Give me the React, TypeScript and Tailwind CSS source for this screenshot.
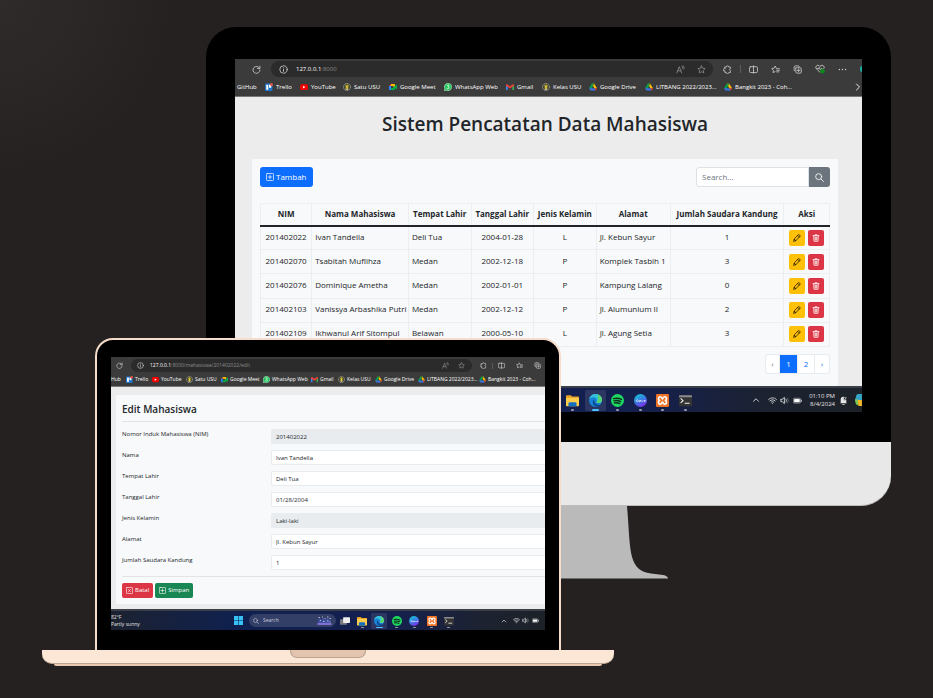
import React from 'react';

const FONT = 'font-["Open_Sans","Noto_Sans",sans-serif]';

type IconProps = { className?: string };

function Line({ className = '', children, w = 1.4 }: { className?: string; children: React.ReactNode; w?: number }) {
  return (
    <svg viewBox="0 0 16 16" className={`shrink-0 ${className}`} fill="none" stroke="currentColor" strokeWidth={w} strokeLinecap="round" strokeLinejoin="round" aria-hidden="true">
      {children}
    </svg>
  );
}

const Reload = ({ className }: IconProps) => (
  <Line className={className}><path d="M13.6 6A6.2 6.2 0 1 0 14.2 8.8" /><path d="M14 2v4.2H9.8" /></Line>
);
const Info = ({ className }: IconProps) => (
  <Line className={className}><circle cx="8" cy="8" r="6.6" /><path d="M8 7.4v4" /><path d="M8 4.7v.3" /></Line>
);
const ReadAloud = ({ className }: IconProps) => (
  <Line className={className}><path d="M1.5 14 5.8 3l4.3 11M3 10.4h5.6M10.4 2.2c1.2 1 1.6 2.4 1 4M12.6 1c1.8 1.6 2.3 4 1.4 6.4" /></Line>
);
const Star = ({ className }: IconProps) => (
  <Line className={className}><path d="m8 1.6 2 4.1 4.5.6-3.3 3.2.8 4.5L8 11.9 4 14l.8-4.5L1.5 6.3 6 5.7z" /></Line>
);
const Puzzle = ({ className }: IconProps) => (
  <Line className={className}><path d="M3.500 3.500h2.500a2 2 0 1 1 4 0h3v3.200a1.600 1.600 0 0 0 0 3.100v3.700H10a2 2 0 0 1-4 0H3.500V10.300a2.200 2.200 0 1 1 0-4z" /></Line>
);
const Split = ({ className }: IconProps) => (
  <Line className={className}><rect x="1" y="3" width="14" height="10.4" rx="1.5" /><path d="M8 1.5v13.2" /></Line>
);
const Favorites = ({ className }: IconProps) => (
  <Line className={className}><path d="M9.5 5.8 7.4 1.8 5.5 5.7l-4.3.6 3.1 3-.7 4.3 3.7-2M10.5 6.6h4.6M10 9.4h5M10 12.2h4" /></Line>
);
const Collections = ({ className }: IconProps) => (
  <Line className={className}><path d="M3.6 10.8A2 2 0 0 1 2 8.600V4a2.500 2.500 0 0 1 2.500-2.500H9A2 2 0 0 1 11.200 3M5.400 4.800h7.300a2 2 0 0 1 2 2v5.700a2 2 0 0 1-2 2H7.200a2 2 0 0 1-2-2zM10 7v5M7.500 9.500h5" /></Line>
);
const Health = ({ className }: IconProps) => (
  <svg viewBox="0 0 16 16" className={`shrink-0 ${className}`} fill="none" aria-hidden="true">
    <path d="M8 13.300 2.400 7.900a3.300 3.300 0 0 1 4.500-5L8 4l1.200-1.100a3.300 3.300 0 0 1 4.700 4.600M2.500 7.500h3l1.300-2.200 1.700 3.900 1.200-1.700h2" stroke="#d4d4d4" strokeWidth="1.300" />
    <circle cx="12" cy="11.500" r="3.800" fill="#10851d" />
  </svg>
);
const Dots = ({ className }: IconProps) => (
  <Line className={className} w={2.4}><path d="M2.500 8h.01M8 8h.01M13.500 8h.01" /></Line>
);
const ChevronUp = ({ className }: IconProps) => <Line className={className} w={1.800}><path d="m3 10.500 5-5 5 5" /></Line>;
const ChevronRight = ({ className }: IconProps) => <Line className={className} w={1.800}><path d="m5 2 6 6-6 6" /></Line>;
const Magnifier = ({ className }: IconProps) => (
  <Line className={className} w={1.500}><circle cx="6.500" cy="6.500" r="5.300" /><path d="m10.500 10.500 4.600 4.600" /></Line>
);
const PlusBox = ({ className }: IconProps) => (
  <Line className={className}><rect x="1" y="1" width="14" height="14" rx="1.500" /><path d="M8 4.500v7M4.500 8h7" /></Line>
);
const CrossBox = ({ className }: IconProps) => (
  <Line className={className}><rect x="1" y="1" width="14" height="14" rx="1.500" /><path d="m5.500 5.500 5 5m0-5-5 5" /></Line>
);
const Pencil = ({ className }: IconProps) => (
  <Line className={className} w={1.400}><path d="m12 1.300 2.700 2.700-9.200 9.500-4.200 1.200L2.500 10.500zM9.800 3.500l2.700 2.700M2.700 10.500l2.800 2.800" /></Line>
);
const Trash = ({ className }: IconProps) => (
  <Line className={className} w={1.500}><path d="M2 3.300h12M6 3V1.500h4V3M3.300 3.500l.7 11h8l.7-11M6.200 6v6M8 6v6M9.800 6v6" /></Line>
);

const Trello = ({ className }: IconProps) => (
  <svg viewBox="0 0 16 16" className={`shrink-0 ${className}`} aria-hidden="true">
    <rect y="1" width="15" height="15" rx="2" fill="#1b74c9" /><rect x="2.500" y="3.500" width="4" height="10" fill="#fff" /><rect x="8" y="3.500" width="4.500" height="6" fill="#fff" /><circle cx="13" cy="3" r="3" fill="#e8503a" />
  </svg>
);
const YouTube = ({ className }: IconProps) => (
  <svg viewBox="0 0 16 16" className={`shrink-0 ${className}`} aria-hidden="true">
    <rect y="2.500" width="16" height="11.500" rx="3" fill="#f00000" /><path d="m6.200 5.700 4.500 2.500-4.500 2.600z" fill="#fff" />
  </svg>
);
const Usu = ({ className }: IconProps) => (
  <svg viewBox="0 0 16 16" className={`shrink-0 ${className}`} fill="none" aria-hidden="true">
    <circle cx="8" cy="8" r="7" stroke="#bdb9a2" strokeWidth="1.500" strokeDasharray="3 1" /><circle cx="8" cy="8" r="5" fill="#5a5b24" /><path d="M8 3v9M5 5.500 8 8l3-2.500M5.500 10h5" stroke="#f3d343" strokeWidth="1.800" /><path d="M5.500 13h5" stroke="#ddd" strokeWidth="1.500" />
  </svg>
);
const Meet = ({ className }: IconProps) => (
  <svg viewBox="0 0 16 16" className={`shrink-0 ${className}`} aria-hidden="true">
    <path d="M4 2v4H0z" fill="#ea4335" /><path d="M4 2h6.500a1.500 1.500 0 0 1 1.500 1.500V8H8.500V6H4z" fill="#fbbc04" /><path d="M0 6h4v8H1.300A1.300 1.300 0 0 1 0 12.700z" fill="#2684fc" /><path d="M4 10h4.500V8L12 6l4-3v10l-4-3v2.500a1.500 1.500 0 0 1-1.500 1.500H4z" fill="#00ac47" />
  </svg>
);
const WhatsApp = ({ className }: IconProps) => (
  <svg viewBox="0 0 16 16" className={`shrink-0 ${className}`} fill="none" aria-hidden="true">
    <path d="M.5 15.500 1.700 11.500A7.400 7.400 0 1 1 4.500 14.300z" fill="#20c45a" stroke="#e8f8ed" /><path d="M5.500 4.500h4.500L8 7.300c3 .3 3 4.200-.2 4.200-1.300 0-2.200-.5-2.600-1.200" stroke="#fff" strokeWidth="1.500" />
  </svg>
);
const Gmail = ({ className }: IconProps) => (
  <svg viewBox="0 0 16 16" className={`shrink-0 ${className}`} aria-hidden="true">
    <path d="M0 4h3.500v10H1a1 1 0 0 1-1-1z" fill="#4285f4" /><path d="M12.500 4H16v9a1 1 0 0 1-1 1h-2.500z" fill="#34a853" /><path d="M0 4.500C0 2.500 2 1.700 3.400 2.800L8 6.300l4.600-3.500C14 1.700 16 2.500 16 4.500v1L8 11 0 5.500z" fill="#ea4335" />
  </svg>
);
const Drive = ({ className }: IconProps) => (
  <svg viewBox="0 0 16 16" className={`shrink-0 ${className}`} aria-hidden="true">
    <path d="M5.500 1.500h5L5.300 10.500H0z" fill="#00a150" /><path d="M5.500 1.500h5l5.500 9h-5.300z" fill="#fbbc04" /><path d="M0 10.500h11L13.300 15H2.700z" fill="#3777e3" /><path d="M5.500 1.500h5L8 6z" fill="#188038" /><path d="M10.700 10.500H16L13.300 15z" fill="#ea4335" />
  </svg>
);

const BOOKMARKS: { label: string; icon: (p: IconProps) => React.ReactElement; wide: string; small: string }[] = [
  { label: 'Trello', icon: Trello, wide: 'w-[35px]', small: 'w-[26px]' },
  { label: 'YouTube', icon: YouTube, wide: 'w-[43px]', small: 'w-[34px]' },
  { label: 'Satu USU', icon: Usu, wide: 'w-[46px]', small: 'w-[35px]' },
  { label: 'Google Meet', icon: Meet, wide: 'w-[55px]', small: 'w-[42px]' },
  { label: 'WhatsApp Web', icon: WhatsApp, wide: 'w-[62px]', small: 'w-[48px]' },
  { label: 'Gmail', icon: Gmail, wide: 'w-[36px]', small: 'w-[27px]' },
  { label: 'Kelas USU', icon: Usu, wide: 'w-[47px]', small: 'w-[37px]' },
  { label: 'Google Drive', icon: Drive, wide: 'w-[56px]', small: 'w-[43px]' },
  { label: 'LITBANG 2022/2023...', icon: Drive, wide: 'w-[79px]', small: 'w-[61px]' },
  { label: 'Bangkit 2023 - Coh...', icon: Drive, wide: 'w-[80px]', small: 'w-[56px]' },
];

function Folder({ className }: IconProps) {
  return (
    <svg viewBox="0 0 16 16" className={className} aria-hidden="true">
      <path d="M0 2.500A1 1 0 0 1 1 1.500h5L7.500 3H15a1 1 0 0 1 1 1v2H0z" fill="#e5a022" /><path d="M0 4.500h16V14a1 1 0 0 1-1 1H1a1 1 0 0 1-1-1z" fill="#fccc4d" /><path d="M3 15v-3.200A1.800 1.800 0 0 1 4.800 10h6.400a1.800 1.800 0 0 1 1.800 1.800V15z" fill="#1270c4" />
    </svg>
  );
}
function Edge({ className }: IconProps) {
  return (
    <svg viewBox="0 0 16 16" className={className} aria-hidden="true">
      <circle cx="8" cy="8" r="8" fill="#1784d8" /><path d="M.3 6.500C1 2.500 4.300 0 8 0c4.500 0 8 3.300 8 7 0 2.700-2 4.200-4.300 4.200-1.800 0-2.700-.8-2.300-1.400C11 7 8.700 4 5.300 4 3 4 1.200 5 .3 6.500z" fill="#35c1dc" /><path d="M10 .3c3.500.8 6 3.500 6 6.700 0 2.700-2 4.200-4.300 4.200-1.800 0-2.700-.8-2.300-1.400C11.800 7 12 2.500 10 .3z" fill="#5bd56f" /><path d="M6 6.500c-3 3.500-.5 8 3 9.300 2.500-.2 4.500-1.300 5.800-3-4 1.500-8-.5-8.800-6.300z" fill="#0d4b96" />
    </svg>
  );
}
function Spotify({ className }: IconProps) {
  return (
    <svg viewBox="0 0 16 16" className={className} aria-hidden="true">
      <circle cx="8" cy="8" r="8" fill="#1ed760" /><path d="M3.300 5.700c3.200-.9 6.700-.6 9.500 1M3.700 8.400c2.700-.7 5.700-.4 8.200.9M4.200 11c2.200-.5 4.700-.3 6.700.8" fill="none" stroke="#0d2c1c" strokeWidth="1.700" strokeLinecap="round" />
    </svg>
  );
}
function Canva({ className }: IconProps) {
  return (
    <svg viewBox="0 0 16 16" className={className} aria-hidden="true">
      <defs><linearGradient id="canva" x1=".2" y1="0" x2=".7" y2="1"><stop stopColor="#13c4d0" /><stop offset=".5" stopColor="#3c7be6" /><stop offset="1" stopColor="#7d2ae8" /></linearGradient></defs>
      <circle cx="8" cy="8" r="8" fill="url(#canva)" /><path d="M4.500 7c-1.500-.5-2.300 2.200-.7 2.200 1 0 1.500-1.200 2.500-1.200-1 1.500 1 1.700 1.300 0l-.2 1.200c.7-1.600 1.700-1.600 1.500 0m.5-1.200 1 1.200 1-1.200m2 0c-1.600-.3-1.500 1.500-.3 1.200l.6-1.200.2 1.200" stroke="#fff" strokeWidth=".8" fill="none" />
    </svg>
  );
}
function Xampp({ className }: IconProps) {
  return (
    <svg viewBox="0 0 16 16" className={className} aria-hidden="true">
      <rect width="16" height="16" rx="1.500" fill="#f07427" /><path d="M5.300 3.500c-3 0-3 4.500 0 4.500-3 0-3 4.500 0 4.500 1.500 0 2.200-2 2.700-2.500.5.500 1.200 2.500 2.700 2.500 3 0 3-4.500 0-4.500 3 0 3-4.500 0-4.500C9.200 3.500 8.500 5.500 8 6c-.5-.5-1.200-2.500-2.700-2.500z" fill="none" stroke="#fff" strokeWidth="1.900" />
    </svg>
  );
}
function Terminal({ className }: IconProps) {
  return (
    <svg viewBox="0 0 16 16" className={className} aria-hidden="true">
      <rect y="1.500" width="16" height="13.500" rx="1" fill="#343434" /><path d="M0 2.500a1 1 0 0 1 1-1h14a1 1 0 0 1 1 1V4H0z" fill="#8b8b8b" /><path d="m2 5.500 3 2.700-3 2.700M7 11.500h6" fill="none" stroke="#f2f2f2" strokeWidth="1.300" />
    </svg>
  );
}
const APPS = [
  { name: 'File Explorer', Icon: Folder },
  { name: 'Edge', Icon: Edge },
  { name: 'Spotify', Icon: Spotify },
  { name: 'Canva', Icon: Canva },
  { name: 'XAMPP', Icon: Xampp },
  { name: 'Terminal', Icon: Terminal },
];

const Wifi = ({ className }: IconProps) => (
  <Line className={className} w={1.500}><path d="M1 6.200c4-4 10-4 14 0M3.300 8.700c2.700-2.700 6.700-2.700 9.400 0M5.600 11c1.400-1.300 3.400-1.300 4.800 0M8 13.300v.1" /></Line>
);
const Speaker = ({ className }: IconProps) => (
  <Line className={className} w={1.500}><path d="M1.500 6v4h2.300l4 3.500v-11L3.800 6zM10.500 5.500c1.300 1.500 1.300 3.500 0 5" /><path d="M13 3.500c2.300 2.700 2.300 6.300 0 9" opacity=".4" /></Line>
);
const Battery = ({ className }: IconProps) => (
  <svg viewBox="0 0 16 16" className={`shrink-0 ${className}`} aria-hidden="true">
    <rect x=".5" y="4" width="13" height="8.500" rx="2" fill="none" stroke="#ddd" /><rect x="2" y="5.500" width="10" height="5.500" rx=".7" fill="#fff" /><path d="M14 6.500h1.500v3.500H14z" fill="#ddd" />
  </svg>
);

function BrowserChrome({ compact, url }: { compact?: boolean; url: string }) {
  const icon = compact ? 'size-[7px]' : 'size-[9px]';
  return (
    <div className={`shrink-0 overflow-hidden whitespace-nowrap border-b border-[#77797a] bg-[#3b3b3b] text-white ${compact ? 'h-[30px] text-[5px]' : 'h-[38px] text-[6px]'}`}>
      <div className={`flex items-center text-[#d0d0d0] ${compact ? 'h-[17px]' : 'h-[20px]'}`}>
        <button aria-label="Reload" className={compact ? 'ml-[5px]' : 'ml-[17px]'}><Reload className={icon} /></button>
        <div className={`flex items-center rounded-full bg-[#2b2b2b] ${compact ? 'ml-[8px] h-[13px] w-[341px] pl-[6px] pr-[7px]' : 'ml-[10px] h-[16px] min-w-0 flex-1 pl-[8px] pr-[7px]'}`}>
          <Info className={icon} />
          <span className={`flex-1 text-[#8c8c8c] ${compact ? 'ml-[6px]' : 'ml-[8px]'}`}><span className="text-white">127.0.0.1</span>{url}</span>
          <ReadAloud className={`text-[#8f8f8f] ${icon}`} />
          <Star className={`text-[#8f8f8f] ${icon} ${compact ? 'ml-[9px]' : 'ml-[12px]'}`} />
        </div>
        <div className={`flex shrink-0 items-center ${compact ? 'ml-[8px]' : 'ml-[10px]'}`}>
          <Puzzle className={icon} />
          <span className={`w-px bg-[#5c5c5c] ${compact ? 'mx-[5px] h-[6px]' : 'mx-[8px] h-[8px]'}`} />
          <div className={`flex items-center ${compact ? 'gap-[11px]' : 'gap-[13px]'}`}>
            <Split className={icon} />
            <Favorites className={icon} />
            <Collections className={icon} />
            {!compact && <Health className="size-[10px]" />}
            {!compact && <Dots className={icon} />}
            {!compact && <span className="h-[6px] w-[2px] rounded-l-full bg-[#19a7a0]" />}
          </div>
        </div>
      </div>
      <div className={`flex items-center ${compact ? 'h-[11px]' : 'h-[16px]'}`}>
        <a href="#github" className={compact ? 'w-[15px] shrink-0' : 'w-[30px] shrink-0 pl-[2px]'}>{compact ? 'Hub' : 'GitHub'}</a>
        {BOOKMARKS.map(({ label, icon: Icon, wide, small }) => (
          <a key={label} href="#bookmark" className={`flex shrink-0 items-center ${compact ? `${small} gap-[2px]` : `${wide} gap-[3px]`}`}>
            <Icon className={compact ? 'size-[7px]' : 'size-[8px]'} />
            {label}
          </a>
        ))}
        {!compact && <ChevronRight className="ml-auto size-[8px]" />}
      </div>
    </div>
  );
}

function AppIcons({ compact }: { compact?: boolean }) {
  return (
    <div className={`flex h-full shrink-0 items-center justify-between ${compact ? 'w-[103px]' : 'w-[134px]'}`}>
      {APPS.map(({ name, Icon }, i) => (
        <button key={name} aria-label={name} className={`flex flex-col items-center rounded-[2px] ${compact ? 'h-[16px] w-[16px] pt-[3px]' : 'h-[21px] w-[21px] pt-[4px]'} ${i === 1 ? 'bg-white/10' : ''}`}>
          <Icon className={compact ? 'size-[10px]' : 'size-[13px]'} />
          <span className={`rounded-full ${compact ? 'mt-px h-px' : 'mt-[2px] h-[2px]'} ${i === 1 ? 'w-[7px] bg-[#4cc2ff]' : 'w-[3px] bg-[#9a9ca3]'}`} />
        </button>
      ))}
    </div>
  );
}

const TASKBAR = 'bg-[linear-gradient(90deg,#1c2230_0%,#0f2050_30%,#15204f_65%,#1c2230_85%,#1d2229_100%)]';

const STUDENTS = [
  ['201402022', 'Ivan Tandella', 'Deli Tua', '2004-01-28', 'L', 'Jl. Kebun Sayur', '1'],
  ['201402070', 'Tsabitah Muflihza', 'Medan', '2002-12-18', 'P', 'Komplek Tasbih 1', '3'],
  ['201402076', 'Dominique Ametha', 'Medan', '2002-01-01', 'P', 'Kampung Lalang', '0'],
  ['201402103', 'Vanissya Arbashika Putri', 'Medan', '2002-12-12', 'P', 'Jl. Alumunium II', '2'],
  ['201402109', 'Ikhwanul Arif Sitompul', 'Belawan', '2000-05-10', 'L', 'Jl. Agung Setia', '3'],
];
const COLUMNS = [
  { title: 'NIM', width: 'w-[9%]', align: 'text-center' },
  { title: 'Nama Mahasiswa', width: 'w-[17%]', align: 'text-left' },
  { title: 'Tempat Lahir', width: 'w-[11%]', align: 'text-left' },
  { title: 'Tanggal Lahir', width: 'w-[11%]', align: 'text-center' },
  { title: 'Jenis Kelamin', width: 'w-[11%]', align: 'text-center' },
  { title: 'Alamat', width: 'w-[13%]', align: 'text-left' },
  { title: 'Jumlah Saudara Kandung', width: 'w-[20%]', align: 'text-center' },
  { title: 'Aksi', width: 'w-[8%]', align: 'text-center' },
];

function StudentList() {
  return (
    <main className="flex flex-1 flex-col bg-[#ececec] pl-[17px] pr-[24px] text-[#212529]">
      <h1 className="pt-[13px] text-center text-[19px] leading-[28px] font-semibold">Sistem Pencatatan Data Mahasiswa</h1>
      <section className="mt-[21px] flex-1 bg-[#f8f9fa] p-[8px] text-[8px] leading-[12px]">
        <div className="flex justify-between">
          <button className="flex h-[20px] items-center gap-[2px] rounded-[3px] bg-[#0d6efd] px-[6px] text-white">
            <PlusBox className="size-[8px]" />Tambah
          </button>
          <form className="flex h-[20px]">
            <input aria-label="Search" placeholder="Search..." className="w-[113px] rounded-l-[3px] border border-[#dee2e6] bg-white px-[5px] placeholder:text-[#6c757d]" />
            <button type="button" aria-label="Search" className="flex w-[21px] items-center justify-center rounded-r-[3px] bg-[#6c757d] text-white"><Magnifier className="size-[9px]" /></button>
          </form>
        </div>
        <table className="mt-[16px] h-[144px] w-full table-fixed border-collapse whitespace-nowrap">
          <thead>
            <tr className="h-[22px] border-b-2 border-[#212529]">
              {COLUMNS.map((c) => <th key={c.title} className={`border-x border-t border-x-[#eceff1] border-t-[#eceff1] p-0 font-bold ${c.width}`}>{c.title}</th>)}
            </tr>
          </thead>
          <tbody>
            {STUDENTS.map((row) => (
              <tr key={row[0]} className="h-[24px]">
                {row.map((cell, i) => <td key={i} className={`border border-[#eceff1] p-0 px-[3px] pb-[2px] ${COLUMNS[i].align}`}>{cell}</td>)}
                <td className="border border-[#eceff1] p-0">
                  <div className="flex justify-center gap-[3px]">
                    <button aria-label="Edit" className="flex size-[16px] items-center justify-center rounded-[2px] bg-[#ffc107] text-black"><Pencil className="size-[8px]" /></button>
                    <button aria-label="Hapus" className="flex size-[16px] items-center justify-center rounded-[2px] bg-[#dc3545] text-white"><Trash className="size-[8px]" /></button>
                  </div>
                </td>
              </tr>
            ))}
          </tbody>
        </table>
        <nav aria-label="Halaman" className="mt-[7px] flex justify-end">
          <div className="flex h-[20px] items-stretch divide-x divide-[#e9ecef] overflow-hidden rounded-[3px] border border-[#e9ecef] bg-white text-[#0d6efd]">
            <button className="w-[14px] text-[#6c757d]">‹</button>
            <button aria-current="page" className="w-[18px] bg-[#0d6efd] text-white">1</button>
            <button className="w-[17px]">2</button>
            <button className="w-[14px]">›</button>
          </div>
        </nav>
      </section>
    </main>
  );
}

const FIELDS = [
  { id: 'nim', label: 'Nomor Induk Mahasiswa (NIM)', value: '201402022', disabled: true },
  { id: 'nama', label: 'Nama', value: 'Ivan Tandella' },
  { id: 'tempat', label: 'Tempat Lahir', value: 'Deli Tua' },
  { id: 'tanggal', label: 'Tanggal Lahir', value: '01/28/2004' },
  { id: 'kelamin', label: 'Jenis Kelamin', value: 'Laki-laki', disabled: true },
  { id: 'alamat', label: 'Alamat', value: 'Jl. Kebun Sayur' },
  { id: 'saudara', label: 'Jumlah Saudara Kandung', value: '1' },
];

function EditForm() {
  return (
    <main className="flex-1 bg-[#ececec] pt-[8px] pl-[5px] text-[#212529]">
      <form className="bg-[#f8f9fa] pb-[6px] pl-[6px] text-[6px]">
        <h2 className="h-[26px] pt-[6px] text-[10px] leading-[16px] font-semibold">Edit Mahasiswa</h2>
        <div className="space-y-[6px] border-y border-[#e2e4e6] pt-[7px] pb-[6px]">
          {FIELDS.map((f) => (
            <div key={f.id} className="flex h-[15px] items-start">
              <label htmlFor={f.id} className="w-[149px] shrink-0 leading-[10px]">{f.label}</label>
              <input id={f.id} defaultValue={f.value} disabled={f.disabled} className="h-[15px] min-w-0 flex-1 rounded-l-[2px] border border-r-0 border-[#e9ecef] bg-white px-[4px] disabled:bg-[#e9ecef]" />
            </div>
          ))}
        </div>
        <div className="mt-[6px] flex gap-[2px] text-white">
          <button type="button" className="flex h-[15px] items-center gap-[2px] rounded-[2px] bg-[#dc3545] px-[4px]"><CrossBox className="size-[7px]" />Batal</button>
          <button type="button" className="flex h-[15px] items-center gap-[2px] rounded-[2px] bg-[#198754] px-[4px]"><PlusBox className="size-[7px]" />Simpan</button>
        </div>
      </form>
    </main>
  );
}

function Monitor() {
  return (
    <section aria-label="Monitor" className="mr-[42px] ml-[206px]">
      <div className="rounded-t-[30px] bg-black px-[29px] pt-[32px] pb-[30px]">
        <div className="flex h-[353px] flex-col overflow-hidden">
          <BrowserChrome url=":8000" />
          <StudentList />
          <footer className={`flex h-[26px] shrink-0 items-center border-t-2 border-[#3a3f48] pl-[327px] text-[#e4e4e4] ${TASKBAR}`}>
            <AppIcons />
            <div className="ml-auto flex items-center">
              <ChevronUp className="mr-[8px] size-[8px]" />
              <Wifi className="mr-[3px] size-[9px]" />
              <Speaker className="mr-[4px] size-[9px]" />
              <Battery className="mr-[7px] size-[9px]" />
              <time className="text-right text-[6px] leading-[8px]">01:10 PM<br />8/4/2024</time>
              <svg viewBox="0 0 16 16" className="ml-[4px] size-[9px]" aria-hidden="true"><path d="M3 12V6.500a5 5 0 0 1 10 0V12l1 1H2zM6 14h4v1.500H6z" fill="#e6e6e6" /><path d="M8.500 2h6v5.500h-6z" fill="#1d2229" /><path d="M9.500 3h3.500l-3.500 4h3.500" stroke="#fff" fill="none" /></svg>
              <svg viewBox="0 0 8 14" className="ml-[7px] h-[12px] w-[7px]" aria-hidden="true"><path d="M3.500 0H8v7L4 9H1C-.5 9 0 6 1 3.500 1.500 1.500 2 0 3.500 0z" fill="#36a5c8" /><path d="M0 6h3l1 7H3C1 13 0 9 0 6z" fill="#7cc653" /><path d="M3 7h5v7H4z" fill="#f3b927" /></svg>
            </div>
          </footer>
        </div>
      </div>
      <div className="h-[64px] rounded-b-[30px] border-b border-[#bdbdbd] bg-[#e8e8e8]" />
      <svg viewBox="0 0 240 73" className="mx-auto block h-[73px] w-[240px]" aria-hidden="true">
        <path d="M41 0H198C200 23 200 39 203 51 206 61 211 66 222 67.500L234 69Q239 70 239 72.500H1Q1 70 6 69L18 67.500C29 66 34 61 37 51 40 39 40 23 41 0z" fill="#bababa" />
      </svg>
    </section>
  );
}

function Laptop() {
  return (
    <section aria-label="Laptop" className="absolute top-[338px] left-[42px] w-[572px]">
      <div className="mx-[53px] rounded-t-[18px] border-2 border-b-0 border-[#f5dccb] bg-black px-[14px] pt-[17px] pb-[20px]">
        <div className="flex h-[273px] flex-col overflow-hidden">
          <BrowserChrome compact url=":8000/mahasiswa/201402022/edit" />
          <EditForm />
          <footer className={`flex h-[21px] shrink-0 items-center border-t-2 border-[#3a3f48] text-[#e4e4e4] ${TASKBAR}`}>
            <div className="w-[123px] text-[5px] leading-[7px]">82°F<br />Partly sunny</div>
            <svg viewBox="0 0 16 16" className="size-[9px]" aria-hidden="true"><path d="M0 0h7.500v7.500H0zM8.500 0H16v7.500H8.500zM0 8.500h7.500V16H0zM8.500 8.500H16V16H8.500z" fill="#36c2f5" /></svg>
            <button className="ml-[6px] flex h-[13px] w-[87px] items-center gap-[4px] rounded-full bg-[#343f68] px-[4px] text-left text-[5px] text-[#c9ccd8]">
              <Magnifier className="size-[6px]" /><span className="flex-1">Search</span>
              <svg viewBox="0 0 30 18" className="h-[9px] w-[15px]" aria-hidden="true"><path d="M2 15V8l4-4 3 5 4-6 3 5 5-4 6 5v6z" fill="#3e4f9d" /><path d="M1 16h28" stroke="#9a7ff0" strokeWidth="3" /><path d="M3 3h3M10 2h2M15 5h2M20 2h3M25 5h3M6 9h2M12 11h3M20 10h3M25 12h2" stroke="#e6d7f5" strokeWidth="1.500" /></svg>
            </button>
            <svg viewBox="0 0 16 16" className="mx-[4px] size-[10px] shrink-0" aria-hidden="true"><rect y="5" width="11" height="9" rx="1" fill="#77797d" /><rect x="5" y="2" width="11" height="9" rx="1" fill="#eee" /></svg>
            <AppIcons compact />
            <div className="mr-[6px] ml-auto flex items-center">
              <ChevronUp className="mr-[6px] size-[6px]" />
              <Wifi className="mr-[2px] size-[7px]" />
              <Speaker className="mr-[3px] size-[7px]" />
              <Battery className="size-[7px]" />
            </div>
          </footer>
        </div>
      </div>
      <div className="flex h-[14px] justify-center rounded-b-[10px] border-b border-[#bba291] bg-[#fce6d6]">
        <div className="h-[8px] w-[76px] rounded-b-[7px] border border-t-0 border-[#bba291] bg-[#e3c4ae]" />
      </div>
      <div className="mx-[12px] h-[2px] rounded-b-[2px] bg-[#e8c7b0]" />
    </section>
  );
}

export default function App() {
  return (
    <div className={`relative min-h-screen overflow-hidden bg-[#252120] bg-[radial-gradient(circle_at_top_left,#2e2b2a,#252120_180px)] pt-[27px] ${FONT}`}>
      <Monitor />
      <Laptop />
    </div>
  );
}
